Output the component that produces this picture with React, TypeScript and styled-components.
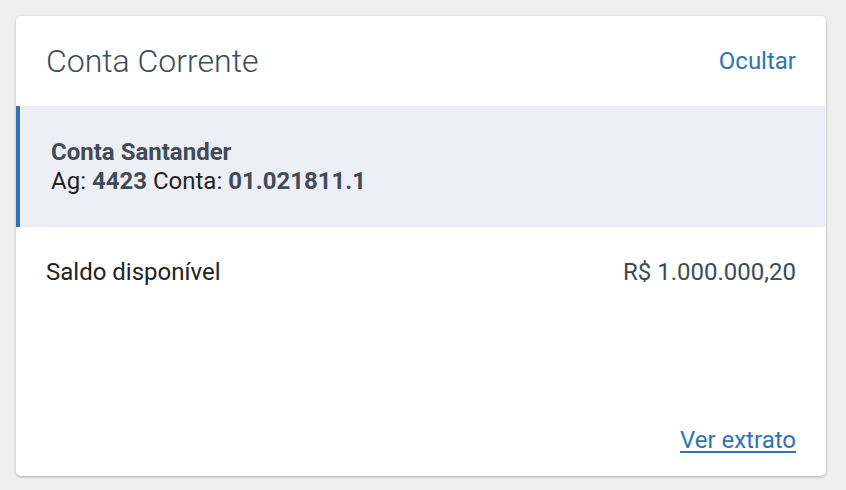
import React from "react";
import styled, { createGlobalStyle } from "styled-components";

const Global = createGlobalStyle`
  html, body { margin: 0; padding: 0; background: #efefef; }
  body { font-family: Roboto, "Noto Sans", sans-serif; -webkit-font-smoothing: antialiased; }
`;

const Page = styled.div`
  padding: 16px 20px 14px 16px;
`;

const Card = styled.section`
  background: #fff;
  border-radius: 5px;
  box-shadow: 0 1px 3px rgba(0, 0, 0, 0.28);
  height: 460px;
  display: flex;
  flex-direction: column;
  overflow: hidden;
`;

const Header = styled.header`
  height: 90px;
  display: flex;
  align-items: center;
  justify-content: space-between;
  padding: 0 30px;
  box-sizing: border-box;
`;

const Title = styled.h2`
  margin: 0;
  font-size: 32px;
  font-weight: 300;
  color: #3e4a55;
`;

const LinkButton = styled.a<{ $underline?: boolean }>`
  color: #2f74b5;
  font-size: 24px;
  line-height: 28px;
  text-decoration: ${(p) => (p.$underline ? "underline" : "none")};
  text-underline-offset: 3px;
  cursor: pointer;
`;

const Account = styled.div`
  height: 121px;
  background: #eeeef7;
  border-left: 4px solid #2f74b5;
  display: flex;
  flex-direction: column;
  justify-content: center;
  padding: 0 31px;
  color: #222;
  font-size: 24px;
  line-height: 29px;
`;

const AccountName = styled.div`
  font-weight: 700;
  color: #414b55;
`;

const Strong = styled.b`
  font-weight: 700;
  color: #414b55;
`;

const Row = styled.div`
  display: flex;
  justify-content: space-between;
  align-items: center;
  padding: 0 30px;
  height: 89px;
  font-size: 24px;
  color: #222;
`;

const Value = styled.span`
  color: #3e4a55;
`;

const Footer = styled.div`
  margin-top: auto;
  display: flex;
  justify-content: flex-end;
  padding: 0 30px 22px;
`;

export default function App() {
  return (
    <Page>
      <Global />
      <Card>
        <Header>
          <Title>Conta Corrente</Title>
          <LinkButton>Ocultar</LinkButton>
        </Header>
        <Account>
          <AccountName>Conta Santander</AccountName>
          <div>
            Ag: <Strong>4423</Strong> Conta: <Strong>01.021811.1</Strong>
          </div>
        </Account>
        <Row>
          <span>Saldo disponível</span>
          <Value>R$ 1.000.000,20</Value>
        </Row>
        <Footer>
          <LinkButton $underline>Ver extrato</LinkButton>
        </Footer>
      </Card>
    </Page>
  );
}
